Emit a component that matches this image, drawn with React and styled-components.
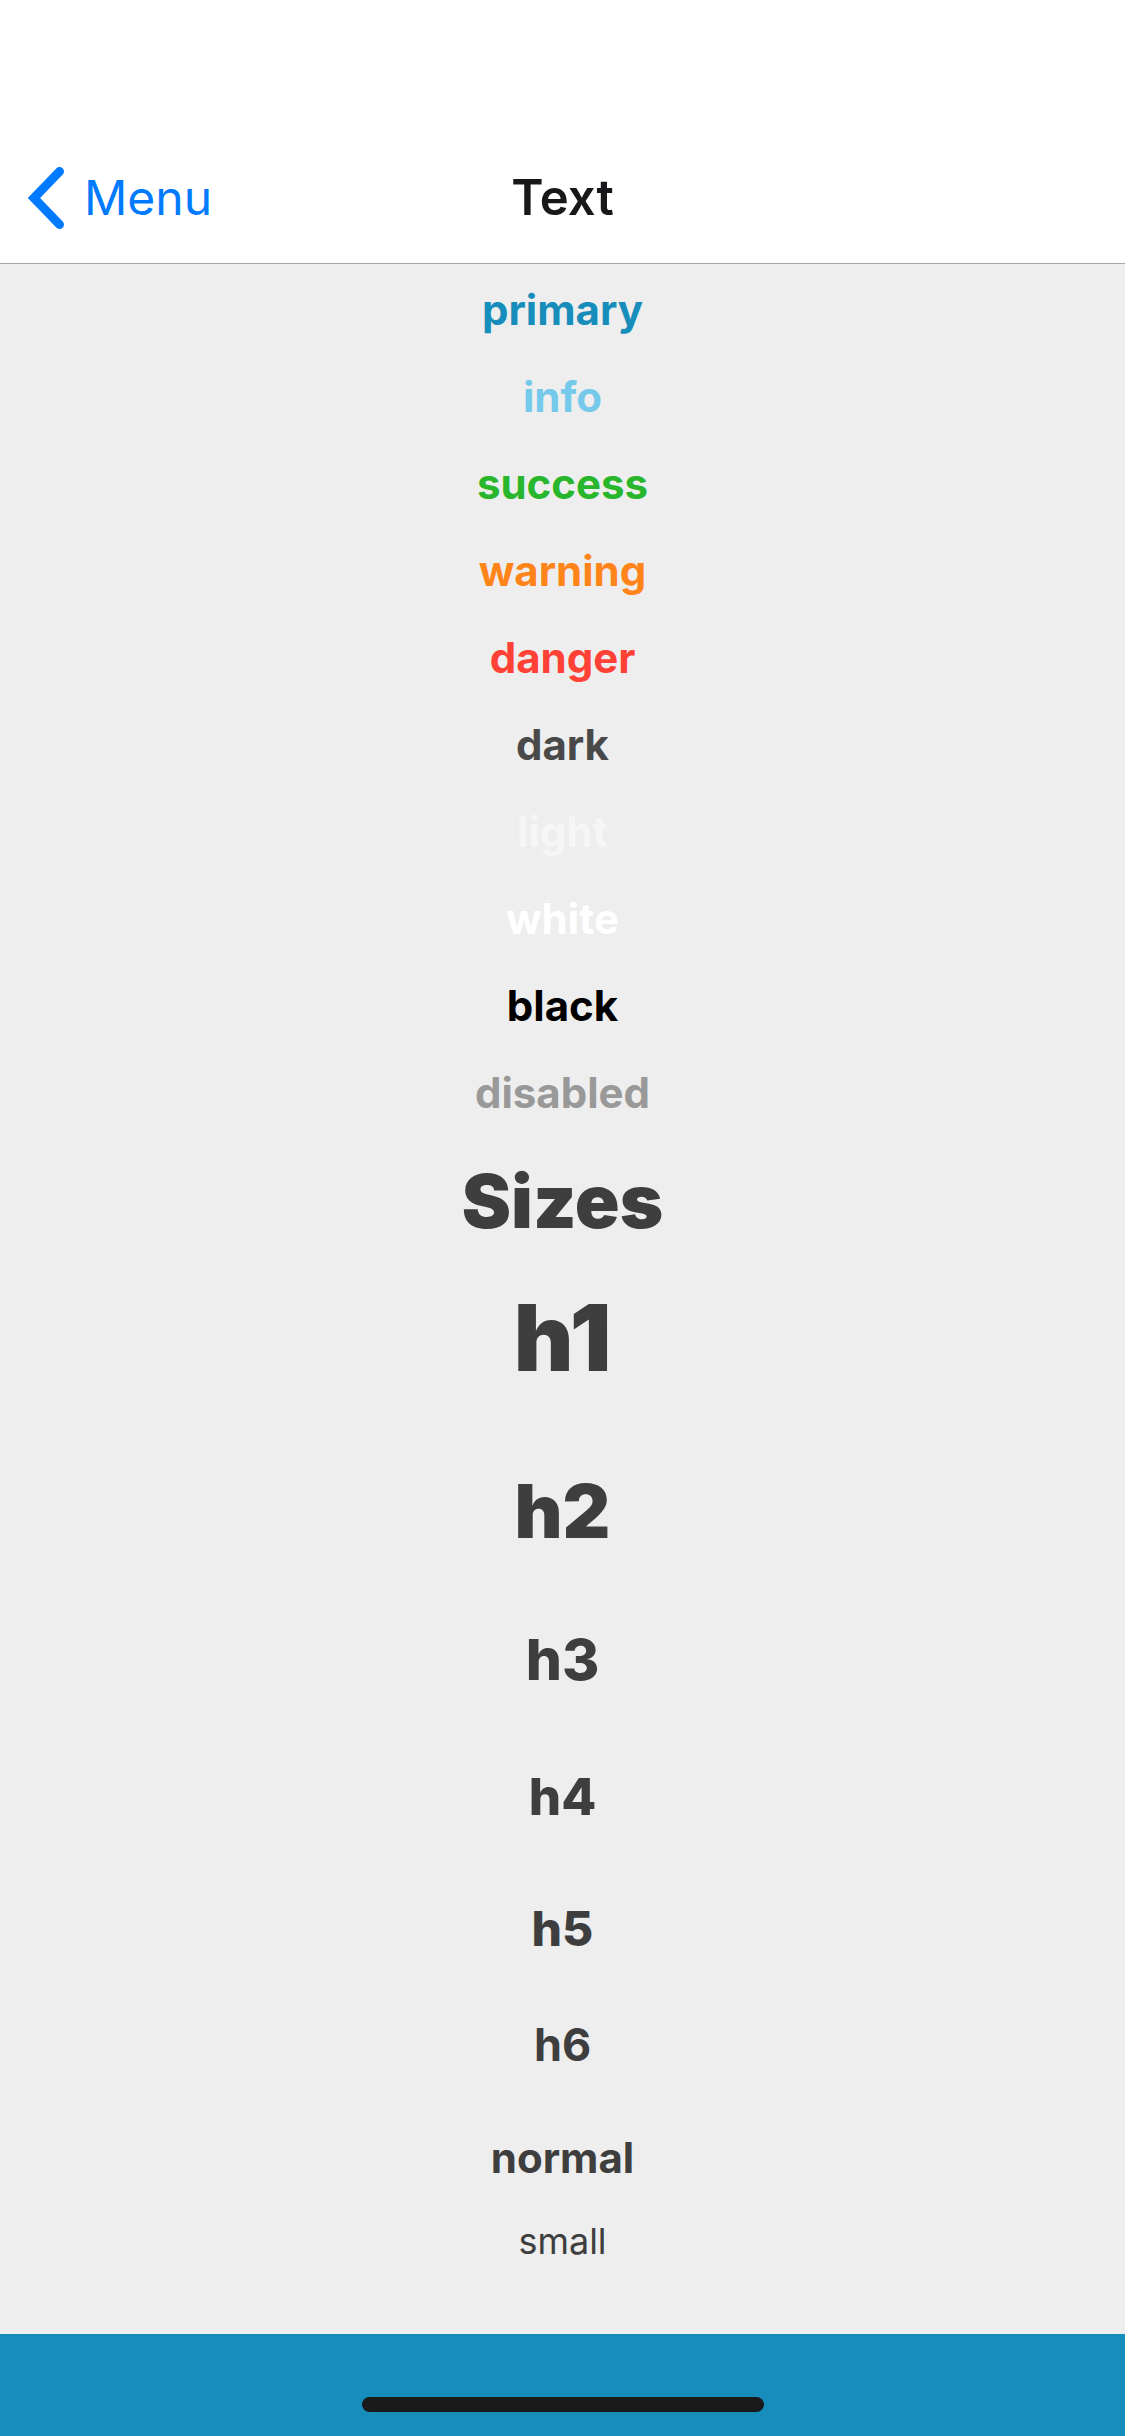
import React from "react";
import styled, { createGlobalStyle } from "styled-components";

const GlobalStyle = createGlobalStyle`
  * { box-sizing: border-box; }
  body {
    margin: 0;
    background: #eeeeee;
    font-family: Inter, "Liberation Sans", sans-serif;
  }
`;

const sizes = {
  h1: { font: 92, weight: 900, line: 144, gap: 36 },
  h2: { font: 74, weight: 900, line: 130, gap: 29 },
  h3: { font: 57, weight: 800, line: 110, gap: 33 },
  h4: { font: 51, weight: 800, line: 98, gap: 36 },
  h5: { font: 48, weight: 800, line: 94, gap: 24 },
  h6: { font: 45, weight: 700, line: 90, gap: 24 },
  normal: { font: 42, weight: 700, line: 87, gap: 0 },
  small: { font: 36, weight: 400, line: 80, gap: 0 },
};

const colors = [
  ["primary", "#178dbb"],
  ["info", "#75caeb"],
  ["success", "#28b62c"],
  ["warning", "#ff851b"],
  ["danger", "#ff4136"],
  ["dark", "#494949"],
  ["light", "#f6f6f6"],
  ["white", "#ffffff"],
  ["black", "#000000"],
  ["disabled", "#999999"],
];

const Screen = styled.div`
  min-height: 100vh;
  display: flex;
  flex-direction: column;
`;

const NavBar = styled.header`
  display: grid;
  grid-template-columns: 1fr auto 1fr;
  align-items: center;
  height: 264px;
  padding: 132px 28px 0;
  background: #ffffff;
  border-bottom: 1px solid #a7a7aa;
`;

const BackButton = styled.button`
  justify-self: start;
  display: flex;
  align-items: center;
  gap: 20px;
  padding: 0;
  border: 0;
  background: none;
  color: #007aff;
  font: 400 48px/60px Inter, "Liberation Sans", sans-serif;
  cursor: pointer;
`;

const Chevron = styled.svg`
  display: block;
  width: 36px;
  height: 62px;
`;

const Title = styled.h1`
  margin: 0;
  color: #18181a;
  font-size: 49px;
  font-weight: 600;
  line-height: 60px;
`;

const Content = styled.main`
  flex: 1;
  padding: 2px 0 48px;
  text-align: center;
`;

const Text = styled.p`
  margin: 0 0 ${({ $size, $flush }) => ($flush ? 0 : sizes[$size].gap)}px;
  color: ${({ $color }) => $color || "#3e3e3e"};
  font-size: ${({ $size }) => sizes[$size].font}px;
  font-weight: ${({ $size }) => sizes[$size].weight};
  line-height: ${({ $size }) => sizes[$size].line}px;
`;

const Footer = styled.footer`
  display: flex;
  justify-content: center;
  align-items: flex-end;
  height: 102px;
  padding-bottom: 24px;
  background: #178dbb;
`;

const HomeIndicator = styled.div`
  width: 402px;
  height: 15px;
  border-radius: 8px;
  background: #1a1a1a;
`;

export default function App() {
  return (
    <Screen>
      <GlobalStyle />
      <NavBar>
        <BackButton type="button">
          <Chevron viewBox="0 0 36 62" fill="none" aria-hidden="true">
            <path
              d="M31.5 4.5 6 31 31.5 57.5"
              stroke="currentColor"
              strokeWidth="9"
              strokeLinecap="round"
              strokeLinejoin="miter"
            />
          </Chevron>
          Menu
        </BackButton>
        <Title>Text</Title>
      </NavBar>
      <Content>
        {colors.map(([name, color]) => (
          <Text key={name} $size="normal" $color={color}>
            {name}
          </Text>
        ))}
        <Text as="h2" $size="h2" $flush>
          Sizes
        </Text>
        {Object.keys(sizes).map((size) => (
          <Text key={size} as={size.startsWith("h") ? size : "p"} $size={size}>
            {size}
          </Text>
        ))}
      </Content>
      <Footer>
        <HomeIndicator />
      </Footer>
    </Screen>
  );
}
